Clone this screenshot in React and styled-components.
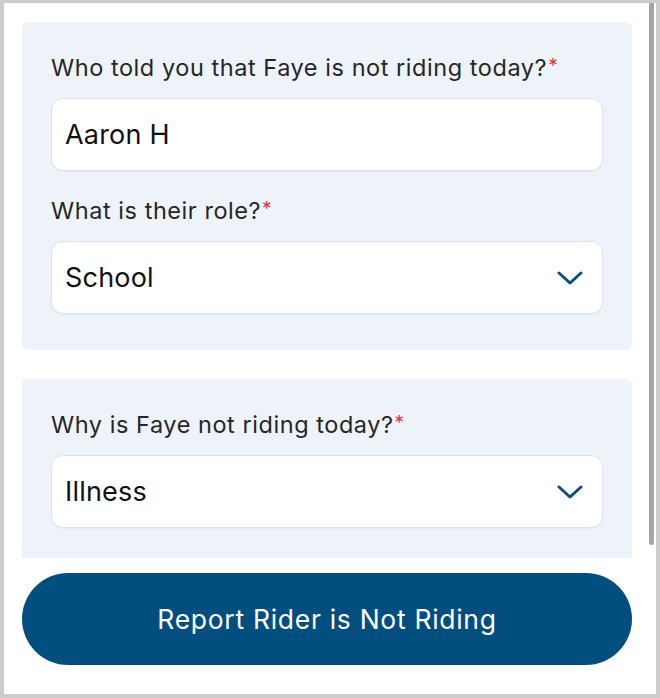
import React from 'react'
import styled, { createGlobalStyle } from 'styled-components'

const GlobalStyle = createGlobalStyle`
  html, body {
    margin: 0;
    padding: 0;
    background: #ffffff;
  }
  * {
    box-sizing: border-box;
  }
`

const Frame = styled.div`
  width: 660px;
  height: 698px;
  border: 4px solid #cccccc;
  border-top-width: 3px;
  background: #ffffff;
  display: flex;
  flex-direction: column;
  font-family: "Inter", "Noto Sans", sans-serif;
  color: #262626;
`

// scroll region + hand drawn scrollbar (headless browser hides the real one)
const ScrollRow = styled.div`
  flex: 1;
  min-height: 0;
  display: flex;
`

const Scroll = styled.div`
  flex: 1;
  min-width: 0;
  overflow: hidden;
  padding: 19px 16px 5px 18px;
  display: flex;
  flex-direction: column;
  gap: 29px;
`

const Track = styled.div`
  width: 8px;
  flex-shrink: 0;
  padding: 0 2px 0 1px;
`

const Thumb = styled.div`
  height: 542px;
  background: #a6a6a6;
  border-radius: 0 0 3px 3px;
`

const Panel = styled.section`
  flex-shrink: 0;
  background: #eef2f9;
  border-radius: 6px;
  padding: 31px 29px 36px;
  display: flex;
  flex-direction: column;
`

const Label = styled.label`
  font-size: 23.5px;
  letter-spacing: 0.55px;
  line-height: 30px;
  color: #262626;
  margin-top: ${({ $first }) => ($first ? '0' : '25px')};
  margin-bottom: 15px;
  white-space: nowrap;
`

const Required = styled.span`
  color: #e8333b;
  font-size: 19px;
  line-height: 0;
  position: relative;
  top: -4px;
  margin-left: 1px;
`

const Field = styled.div`
  height: 73px;
  background: #ffffff;
  border: 1px solid #dde3ea;
  border-radius: 12px;
  box-shadow: 0 1px 1px rgba(0, 0, 0, 0.04);
  display: flex;
  align-items: center;
  justify-content: space-between;
  padding: 0 19px 0 13px;
  font-size: 27px;
  letter-spacing: 0.2px;
  color: #111111;
`

const Chevron = () => (
  <svg width="26" height="14" viewBox="0 0 26 14" fill="none">
    <path d="M2 2 L13 12 L24 2" stroke="#0b4f7c" strokeWidth="3" strokeLinecap="round" strokeLinejoin="round" />
  </svg>
)

const Footer = styled.div`
  flex-shrink: 0;
  padding: 15px 24px 29px 18px;
`

const Button = styled.button`
  width: 100%;
  height: 92px;
  border: none;
  border-radius: 46px;
  background: #024e7f;
  color: #ffffff;
  font-family: inherit;
  font-size: 26.5px;
  letter-spacing: 0.7px;
  cursor: pointer;
`

function App() {
  return (
    <>
      <GlobalStyle />
      <Frame>
        <ScrollRow>
          <Scroll>
            <Panel>
              <Label $first>
                Who told you that Faye is not riding today?<Required>*</Required>
              </Label>
              <Field>Aaron H</Field>
              <Label>
                What is their role?<Required>*</Required>
              </Label>
              <Field>
                School
                <Chevron />
              </Field>
            </Panel>
            <Panel>
              <Label $first>
                Why is Faye not riding today?<Required>*</Required>
              </Label>
              <Field>
                Illness
                <Chevron />
              </Field>
            </Panel>
          </Scroll>
          <Track>
            <Thumb />
          </Track>
        </ScrollRow>
        <Footer>
          <Button>Report Rider is Not Riding</Button>
        </Footer>
      </Frame>
    </>
  )
}

export default App
